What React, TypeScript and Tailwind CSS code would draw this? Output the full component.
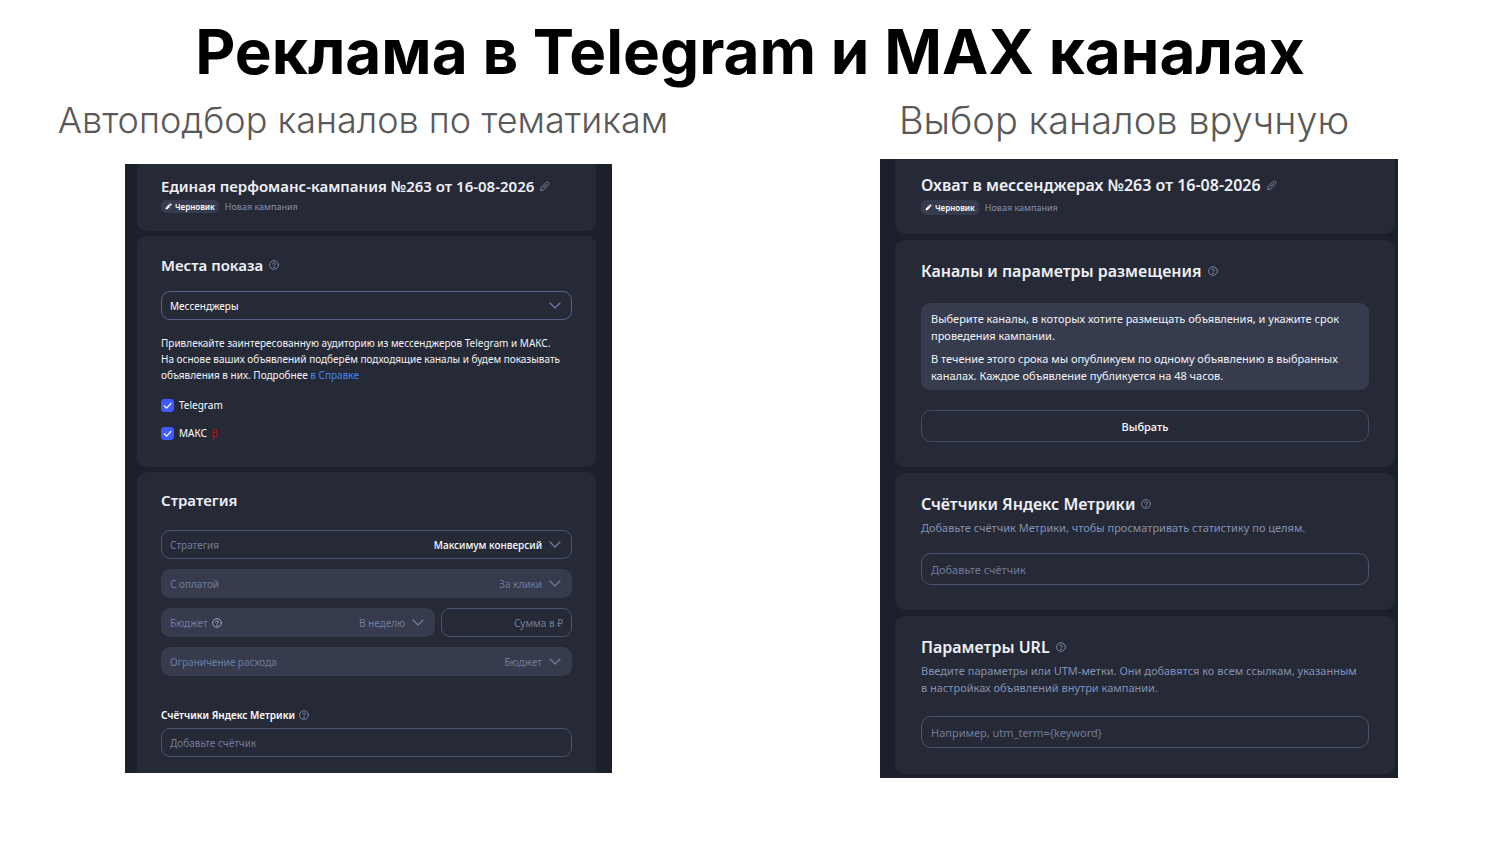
import type { ReactNode } from 'react'

const HelpIcon = ({ className }: { className?: string }) => (
  <svg
    viewBox="0 0 16 16"
    className={className ?? 'size-[10px] flex-none text-[#7d89ab]'}
    fill="none"
    stroke="currentColor"
    strokeLinecap="round"
    strokeLinejoin="round"
    strokeWidth="1.5"
  >
    <circle cx="8" cy="8" r="7" />
    <path d="M5.8 6.4a2.2 2 0 1 1 3.4 1.7C8.400 8.600 8 8.800 8 9.400" />
    <circle cx="8" cy="11.800" r="0.4" fill="currentColor" />
  </svg>
)

const PencilIcon = () => (
  <svg
    viewBox="0 0 16 16"
    className="size-[10px] flex-none text-[#8a94b3]"
    fill="none"
    stroke="currentColor"
    strokeLinecap="round"
    strokeLinejoin="round"
    strokeWidth="1.3"
  >
    <path d="M1.200 14.800l.8-4.600L10 2.200a2.700 2.700 0 0 1 3.800 3.800L5.800 14z" />
    <path d="M5.500 10.500l5-5" />
  </svg>
)

const DraftIcon = () => (
  <svg
    viewBox="0 0 16 16"
    className="size-[7px] flex-none text-white"
    fill="currentColor"
  >
    <path d="M1 15l1.200-5L8.500 3.700l3.800 3.800L6 13.800zM9.500 2.700L11 1.200q1-.8 2 0l1.800 1.800q.8 1 0 2l-1.500 1.500z" />
  </svg>
)

const ChevronIcon = () => (
  <svg
    viewBox="0 0 12 7"
    className="h-[7px] w-3 flex-none text-[#6f7ea3]"
    fill="none"
    stroke="currentColor"
    strokeLinecap="round"
    strokeLinejoin="round"
    strokeWidth="1.2"
  >
    <path d="M1 1l5 5 5-5" />
  </svg>
)

const CampaignHeader = ({
  title,
  size,
  badge,
}: {
  title: string
  size: string
  badge: string
}) => (
  <>
    <div className="flex items-center gap-1.5">
      <h3
        className={`leading-5 font-semibold whitespace-nowrap text-[#eef0f6] ${size}`}
      >
        {title}
      </h3>
      <button aria-label="Переименовать">
        <PencilIcon />
      </button>
    </div>
    <div className={`flex items-center gap-1.5 text-[9px] ${badge}`}>
      <span className="flex h-full items-center gap-[3px] rounded-[5px] bg-[#363c4e] px-1 text-[8px] font-semibold text-white">
        <DraftIcon />
        Черновик
      </span>
      <span className="text-[#8490b2]">Новая кампания</span>
    </div>
  </>
)

const CardTitle = ({
  children,
  size,
  help,
}: {
  children: ReactNode
  size: string
  help?: boolean
}) => (
  <div className="flex items-center gap-1.5">
    <h3
      className={`leading-5 font-semibold whitespace-nowrap text-[#eef0f6] ${size}`}
    >
      {children}
    </h3>
    {help && <HelpIcon />}
  </div>
)

type SelectFieldProps = {
  id: string
  label: string
  value: string
  help?: boolean
  disabled?: boolean
}

const SelectField = ({ id, label, value, help, disabled }: SelectFieldProps) => (
  <div
    className={
      disabled
        ? 'flex h-[29px] min-w-0 flex-1 items-center gap-1 rounded-[9px] bg-[#363c4e] px-[9px]'
        : 'flex h-[29px] min-w-0 flex-1 items-center gap-1 rounded-[9px] border border-[#4a5370] px-2'
    }
  >
    <label htmlFor={id} className="flex-none text-[#6f7b9c]">
      {label}
    </label>
    {help && <HelpIcon className="size-[10px] flex-none text-[#a3abc4]" />}
    <select
      id={id}
      disabled={disabled}
      className="min-w-0 flex-1 appearance-none bg-transparent text-right font-medium text-white [text-align-last:right] disabled:font-normal disabled:text-[#6f7b9c] disabled:opacity-100"
    >
      <option>{value}</option>
    </select>
    <span className="pr-0.5 pl-[3px]">
      <ChevronIcon />
    </span>
  </div>
)

const Checkbox = ({ id, children }: { id: string; children: ReactNode }) => (
  <div className="flex h-4 items-center gap-[5px]">
    <span className="grid size-[13px]">
      <input
        id={id}
        type="checkbox"
        defaultChecked
        className="peer col-start-1 row-start-1 size-[13px] appearance-none rounded-[3px] border border-[#4a5370] checked:border-[#3f5bff] checked:bg-[#3f5bff]"
      />
      <svg
        viewBox="0 0 13 13"
        className="pointer-events-none invisible col-start-1 row-start-1 text-white peer-checked:visible"
        fill="none"
        stroke="currentColor"
        strokeLinecap="round"
        strokeLinejoin="round"
        strokeWidth="1.2"
      >
        <path d="M3.200 6.800l2.400 2.300 4.300-4.600" />
      </svg>
    </span>
    <label htmlFor={id} className="text-white">
      {children}
    </label>
  </div>
)

const AutoPanel = () => (
  <div className="flex flex-col gap-[5px] bg-[#1c202b] pr-4 pl-3 text-[10px] leading-4">
    <div className="rounded-b-[9px] bg-[#262a36] px-6 pt-3 pb-[18px]">
      <CampaignHeader
        title="Единая перфоманс-кампания №263 от 16-08-2026"
        size="text-[15px]"
        badge="mt-1 h-[13px]"
      />
    </div>

    <div className="rounded-[9px] bg-[#262a36] px-6 pt-[19px] pb-[26px]">
      <CardTitle size="text-[15px]" help>
        Места показа
      </CardTitle>
      <div className="mt-4 flex h-[29px] items-center rounded-[9px] border border-[#56618a] pr-2.5 pl-2">
        <select
          aria-label="Места показа"
          className="flex-1 appearance-none bg-transparent text-white"
        >
          <option>Мессенджеры</option>
        </select>
        <ChevronIcon />
      </div>
      <p className="mt-[15px] text-[#f2f3f8]">
        Привлекайте заинтересованную аудиторию из мессенджеров Telegram и МАКС.
        На&nbsp;основе ваших объявлений подберём подходящие каналы и будем
        показывать объявления в них. Подробнее{' '}
        <a href="#help" className="text-[#3f83f8]">
          в Справке
        </a>
      </p>
      <div className="mt-[14px] flex flex-col gap-3">
        <Checkbox id="telegram">Telegram</Checkbox>
        <Checkbox id="max">
          МАКС <span className="ml-0.5 text-[#c00d14]">β</span>
        </Checkbox>
      </div>
    </div>

    <div className="rounded-t-[9px] bg-[#262a36] px-6 pt-[18px] pb-4">
      <CardTitle size="text-[15px]">Стратегия</CardTitle>
      <div className="mt-5 flex flex-col gap-2.5">
        <div className="flex">
          <SelectField
            id="strategy"
            label="Стратегия"
            value="Максимум конверсий"
          />
        </div>
        <div className="flex">
          <SelectField id="payment" label="С оплатой" value="За клики" disabled />
        </div>
        <div className="flex gap-1.5">
          <SelectField
            id="budget"
            label="Бюджет"
            value="В неделю"
            help
            disabled
          />
          <input
            aria-label="Сумма"
            placeholder="Сумма в ₽"
            className="h-[29px] w-[131px] rounded-[9px] border border-[#4a5370] px-2 text-right placeholder:text-[#6f7b9c]"
          />
        </div>
        <div className="flex">
          <SelectField
            id="limit"
            label="Ограничение расхода"
            value="Бюджет"
            disabled
          />
        </div>
      </div>
      <div className="mt-[31px] flex items-center gap-1">
        <label htmlFor="counter-auto" className="font-semibold text-white">
          Счётчики Яндекс Метрики
        </label>
        <HelpIcon />
      </div>
      <input
        id="counter-auto"
        placeholder="Добавьте счётчик"
        className="mt-[5px] block h-[29px] w-full rounded-[9px] border border-[#4a5370] px-2 text-white placeholder:text-[#6f7b9c]"
      />
    </div>
  </div>
)

const ManualPanel = () => (
  <div className="flex flex-col gap-1.5 bg-[#1c202b] pr-[3px] pb-1 pl-[15px] text-[11px] leading-[17px]">
    <div className="rounded-b-[10px] bg-[#262a36] px-[26px] pt-4 pb-[19px]">
      <CampaignHeader
        title="Охват в мессенджерах №263 от 16-08-2026"
        size="text-[16px]"
        badge="mt-[5px] h-[15px]"
      />
    </div>

    <div className="rounded-[10px] bg-[#262a36] px-[26px] pt-[21px] pb-[25px]">
      <CardTitle size="text-[16px]" help>
        Каналы и параметры размещения
      </CardTitle>
      <div className="mt-[22px] flex flex-col gap-1.5 rounded-[9px] bg-[#363c4e] px-2.5 pt-[7px] pb-1.5 text-[#f2f3f8]">
        <p>
          Выберите каналы, в которых хотите размещать объявления, и укажите срок
          проведения кампании.
        </p>
        <p>
          В течение этого срока мы опубликуем по одному объявлению в выбранных
          каналах. Каждое объявление публикуется на 48 часов.
        </p>
      </div>
      <button className="mt-5 block h-8 w-full rounded-[10px] border border-[#434b66] font-medium text-white">
        Выбрать
      </button>
    </div>

    <div className="rounded-[10px] bg-[#262a36] px-[26px] pt-[21px] pb-[25px]">
      <CardTitle size="text-[16px]" help>
        Счётчики Яндекс Метрики
      </CardTitle>
      <p className="mt-[5px] text-[#8490b2]">
        Добавьте счётчик Метрики, чтобы просматривать статистику по целям.
      </p>
      <input
        aria-label="Счётчик Метрики"
        placeholder="Добавьте счётчик"
        className="mt-[17px] block h-8 w-full rounded-[10px] border border-[#4a5370] px-[9px] text-white placeholder:text-[#6f7b9c]"
      />
    </div>

    <div className="rounded-[10px] bg-[#262a36] px-[26px] pt-[21px] pb-[26px]">
      <CardTitle size="text-[16px]" help>
        Параметры URL
      </CardTitle>
      <p className="mt-[5px] text-[#8490b2]">
        Введите параметры или UTM-метки. Они добавятся ко всем ссылкам,
        указанным в&nbsp;настройках объявлений внутри кампании.
      </p>
      <input
        aria-label="Параметры URL"
        placeholder="Например, utm_term={keyword}"
        className="mt-5 block h-8 w-full rounded-[10px] border border-[#4a5370] px-[9px] text-white placeholder:text-[#6f7b9c]"
      />
    </div>
  </div>
)

const App = () => {
  return (
    <main className="min-h-screen bg-white pt-4 pb-16 font-['Noto_Sans',sans-serif]">
      <h1 className="text-center font-['Inter',sans-serif] text-[62px] leading-[72px] font-bold text-black">
        Реклама в Telegram и MAX каналах
      </h1>

      <div className="grid grid-cols-[minmax(0,736fr)_minmax(0,722fr)] items-start gap-x-[42px]">
        <section>
          <h2 className="mt-2 mb-5 pr-2.5 text-center font-['Inter',sans-serif] text-[36px] leading-[48px] font-light whitespace-nowrap text-[#595959]">
            Автоподбор каналов по тематикам
          </h2>
          <div className="pr-[124px] pl-[125px]">
            <AutoPanel />
          </div>
        </section>
        <section>
          <h2 className="mt-2 mb-[15px] pr-[30px] text-center font-['Inter',sans-serif] text-[38px] leading-[48px] font-light whitespace-nowrap text-[#595959]">
            Выбор каналов вручную
          </h2>
          <div className="px-[102px]">
            <ManualPanel />
          </div>
        </section>
      </div>
    </main>
  )
}

export default App
